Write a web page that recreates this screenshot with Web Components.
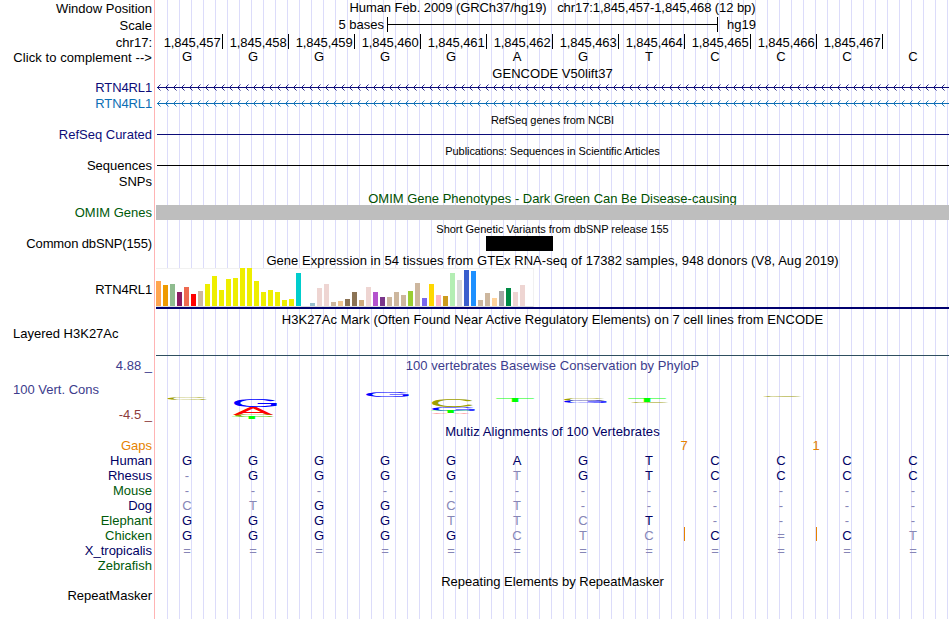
<!DOCTYPE html>
<html lang="en">
<head>
<meta charset="UTF-8">
<title>Genome Browser chr17:1,845,457-1,845,468</title>
<style>
    body {
        margin: 0;
        background: #fff;
        overflow: hidden;
    }
</style>
</head>
<body>
<genome-browser></genome-browser>

<script>
// One horizontal band: a label on the left, the track on the right
class TrackRow extends HTMLElement {
    connectedCallback() {
        this.attachShadow({ mode: 'open' });
        this.shadowRoot.innerHTML = `
            <style>
                :host {
                    display: grid;
                    grid-template-columns: 152px 793px;
                    column-gap: 4px;
                    height: var(--h, 15px);
                    line-height: 15px;
                }
                .label {
                    text-align: right;
                    white-space: nowrap;
                    color: var(--label, #000);
                    padding-top: var(--label-top, 0px);
                    letter-spacing: var(--label-ls, 0);
                }
                .track {
                    min-width: 0;
                }
            </style>
            <div class="label"><slot name="label"></slot></div>
            <div class="track"><slot></slot></div>
        `;
    }
}

// Centred caption above a track
class TrackTitle extends HTMLElement {
    connectedCallback() {
        this.attachShadow({ mode: 'open' });
        this.shadowRoot.innerHTML = `
            <style>
                :host {
                    display: block;
                    text-align: center;
                    white-space: nowrap;
                    line-height: 15px;
                    letter-spacing: var(--ls, 0);
                }
                :host([small]) {
                    font-size: 11px;
                    line-height: 16px;
                }
            </style>
            <slot></slot>
        `;
    }
}

class ScaleBar extends HTMLElement {
    connectedCallback() {
        this.attachShadow({ mode: 'open' });
        this.shadowRoot.innerHTML = `
            <style>
                :host {
                    display: grid;
                    grid-template-columns: 228px 331px auto;
                    column-gap: 3px;
                    height: 15px;
                    margin-top: -1px;
                }
                .from { text-align: right; }
                .to { padding-left: 6px; }
                .bar {
                    box-sizing: border-box;
                    border: solid #000;
                    border-width: 0 1px;
                    background: linear-gradient(#000, #000) 0 7px / 100% 1px no-repeat;
                }
            </style>
            <span class="from">5 bases</span>
            <span class="bar"></span>
            <span class="to">hg19</span>
        `;
    }
}

class PositionRuler extends HTMLElement {
    connectedCallback() {
        this.attachShadow({ mode: 'open' });
        let cells = '';
        for (let i = 57; i < 68; i++) {
            cells += `<span>1,845,4${i}</span>`;
        }
        this.shadowRoot.innerHTML = `
            <style>
                :host {
                    display: grid;
                    grid-template-columns: 67px repeat(10, 66px);
                    margin-top: -1px;
                    line-height: 17px;
                    height: 15px;
                    letter-spacing: -0.12px;
                }
                span {
                    height: 15px;
                    text-align: right;
                    padding-right: 1.5px;
                    border-right: 1px solid #000;
                }
            </style>
            ${cells}
        `;
    }
}

const HUMAN = 'GGGGGAGTCCCC';

class BaseRow extends HTMLElement {
    connectedCallback() {
        const bases = this.getAttribute('bases');
        const gaps = (this.getAttribute('gaps') || '').split(',').map(Number);
        this.attachShadow({ mode: 'open' });
        const cells = [...bases].map((b, i) => {
            const cls = (b === HUMAN[i] ? 'same' : 'diff') + (gaps.includes(i + 1) ? ' gap' : '');
            return `<span class="${cls}">${b}</span>`;
        }).join('');
        this.shadowRoot.innerHTML = `
            <style>
                :host {
                    display: grid;
                    grid-template-columns: repeat(12, 66px);
                    margin-left: -2px;
                    line-height: 15px;
                    height: 15px;
                    text-align: center;
                }
                .same { color: var(--same, #000064); }
                .diff { color: #8686b6; }
                .gap {
                    background: linear-gradient(#e68200, #e68200) 100% 0 / 1px 14px no-repeat;
                    background-origin: border-box;
                    background-clip: border-box;
                    border-right: 3px solid transparent;
                    margin: -1px -3px 0 0;
                    padding-top: 1px;
                    height: 14px;
                }
            </style>
            ${cells}
        `;
    }
}

class GapCounts extends HTMLElement {
    connectedCallback() {
        this.attachShadow({ mode: 'open' });
        this.shadowRoot.innerHTML = `
            <style>
                :host {
                    display: grid;
                    grid-template-columns: 495px 66px 66px 66px;
                    color: #e68200;
                    text-align: center;
                }
            </style>
            <span></span><span>7</span><span></span><span>1</span>
        `;
    }
}

// Intron line with strand arrows, pointing left
class StrandLine extends HTMLElement {
    connectedCallback() {
        this.attachShadow({ mode: 'open' });
        let d = '';
        for (let x = 1; x < 793; x += 8) {
            d += `M${x + 3.5} 4.5L${x + 0.5} 7.5L${x + 3.5} 10.5`;
        }
        this.shadowRoot.innerHTML = `
            <style>
                :host, svg { display: block; }
            </style>
            <svg width="793" height="15" fill="none" stroke="currentColor">
                <path d="M1 7.5H793"/>
                <path d="${d}" stroke-width="0.9"/>
            </svg>
        `;
    }
}

class FlatLine extends HTMLElement {
    connectedCallback() {
        this.attachShadow({ mode: 'open' });
        this.shadowRoot.innerHTML = `
            <style>
                :host {
                    display: block;
                    height: 1px;
                    background: currentColor;
                    margin: 7px 0 0 1px;
                }
            </style>
        `;
    }
}

class ItemBlock extends HTMLElement {
    connectedCallback() {
        this.attachShadow({ mode: 'open' });
        this.shadowRoot.innerHTML = `
            <style>
                :host {
                    display: block;
                    height: 15px;
                    background: currentColor;
                    margin-left: var(--start, 0px);
                    width: var(--span, 793px);
                }
            </style>
        `;
    }
}

// [colour, heights...] in tissue order
const TISSUES = [
    ['#ffa54f', 25], ['#ee9a00', 21], ['#8fbc8f', 22], ['#8b1c62', 14],
    ['#ee6a50', 19], ['#ff0000', 12], ['#cdb79e', 15],
    ['#eeee00', 22, 30, 16, 27, 28, 38, 38, 25, 14, 16, 14, 6, 7],
    ['#00cdcd', 33], ['#ee82ee', 0], ['#9ac0cd', 3], ['#eed5d2', 18, 22],
    ['#cdb79e', 4], ['#eec591', 5], ['#8b7355', 7, 14], ['#cdaa7d', 6],
    ['#eed5d2', 19], ['#b452cd', 14], ['#7a378b', 9], ['#cdb79e', 9, 14, 11],
    ['#9acd32', 15], ['#cdb79e', 23], ['#7a67ee', 8], ['#ffd700', 22],
    ['#ffb6c1', 11], ['#cd9b1d', 10], ['#b4eeb4', 33], ['#d9d9d9', 26],
    ['#3a5fcd', 36], ['#1e90ff', 35], ['#cdb79e', 6, 13], ['#ffd39b', 8],
    ['#a6a6a6', 15], ['#008b45', 18], ['#eed5d2', 14, 21], ['#ff00ff', 0]
];

class ExpressionChart extends HTMLElement {
    connectedCallback() {
        this.attachShadow({ mode: 'open' });
        const bars = TISSUES.flatMap(([color, ...heights]) =>
            heights.map(h => `<i style="height:${h}px;background:${color}"></i>`)
        ).join('');
        this.shadowRoot.innerHTML = `
            <style>
                :host {
                    display: block;
                    height: 39px;
                    border-bottom: 2px solid #00006e;
                }
                .chart {
                    box-sizing: border-box;
                    display: flex;
                    align-items: flex-end;
                    gap: 2px;
                    width: 378px;
                    height: 39px;
                    background: #fff;
                    border: solid #f1f1f1;
                    border-width: 1px 1px 1px 0;
                    border-bottom-color: #ddd;
                }
                i { flex: 0 0 5px; }
            </style>
            <div class="chart">${bars}</div>
        `;
    }
}

// Horizontal ink extent, cap height and overshoot of the letters at 10px
const INK = {
    A: [0.02, 6.65, 6.9, 0],
    C: [0.5, 6.86, 7.0, 0.1],
    G: [0.5, 7.1, 7.0, 0.1],
    T: [0.2, 5.9, 6.9, 0]
};

// letter, left, right, top, bottom, colour
const LOGO = [
    ['C', 11.5, 51, 40, 42, '#a0a000'],
    ['G', 78, 121, 41, 49, '#0000ff'],
    ['A', 77, 117, 49, 57, '#ff0000'],
    ['C', 79, 118, 57, 59, '#a0a000'],
    ['T', 76, 116, 59, 61, '#00ff00'],
    ['G', 210, 253, 34, 39, '#0000ff'],
    ['C', 276, 317, 41, 49, '#a0a000'],
    ['G', 276, 319, 49, 53, '#0000ff'],
    ['T', 275, 314, 53, 55, '#00ff00'],
    ['A', 275, 314, 55, 56, '#ff0000'],
    ['T', 340, 378, 40, 44, '#00ff00'],
    ['C', 408, 449, 40, 43, '#a0a000'],
    ['G', 408, 451, 43, 45, '#0000ff'],
    ['T', 472, 510, 40, 44, '#00ff00'],
    ['C', 475, 513, 44, 45, '#a0a000'],
    ['C', 607, 646, 38, 39, '#a0a000']
];

class ConservationLogo extends HTMLElement {
    connectedCallback() {
        this.attachShadow({ mode: 'open' });
        const letters = LOGO.map(([ch, x0, x1, y0, y1, color]) => {
            const [l, r, top, under] = INK[ch];
            const sx = (x1 - x0) / (r - l);
            const sy = (y1 - y0) / (top + under);
            return `<text fill="${color}" transform="translate(${x0 - l * sx} ${y1 - under * sy}) scale(${sx} ${sy})">${ch}</text>`;
        }).join('');
        this.shadowRoot.innerHTML = `
            <style>
                :host { display: block; margin-top: -15px; }
                svg { display: block; }
                text { font: 10px "Liberation Sans", Arial, sans-serif; }
            </style>
            <svg width="793" height="66">${letters}</svg>
        `;
    }
}

class GenomeBrowser extends HTMLElement {
    connectedCallback() {
        this.attachShadow({ mode: 'open' });
        this.shadowRoot.innerHTML = `
            <style>
                :host {
                    display: block;
                    width: 949px;
                    height: 619px;
                    overflow: hidden;
                    color: #000;
                    font: 13px "Liberation Sans", Arial, Helvetica, sans-serif;
                    background:
                        linear-gradient(#ffb4b4, #ffb4b4) 154px 0 / 1px 100% no-repeat,
                        repeating-linear-gradient(90deg, #dcdcfa 0 1px, transparent 1px 12px) 167px 0 / 792px 100% no-repeat,
                        #fff;
                }
                .left { display: block; text-align: left; padding-left: 13px; }
                .limits {
                    display: grid;
                    grid-template-rows: 24px 25px 15px;
                }
                .dark { color: #000064; }
                .blue { --label: #0c0c78; }
                .light { --label: #0c6eb4; }
                .navy { --label: #000064; }
                .green { --label: #005a0a; }
                .tight { --label-ls: -0.13px; }
            </style>
            <track-row style="--h:18px;--label-top:1px">
                <span slot="label">Window Position</span>
                <track-title style="--ls:-0.08px">Human Feb. 2009 (GRCh37/hg19) &nbsp; chr17:1,845,457-1,845,468 (12 bp)</track-title>
            </track-row>
            <track-row style="--h:17px"><span slot="label">Scale</span><scale-bar></scale-bar></track-row>
            <track-row><span slot="label">chr17:</span><position-ruler></position-ruler></track-row>
            <track-row style="--h:16px;--label-ls:0.08px">
                <span slot="label">Click to complement --&gt;</span>
                <base-row bases="${HUMAN}" style="--same:#000;margin-top:-1px"></base-row>
            </track-row>

            <track-row style="--h:14px"><track-title style="--ls:0.02px">GENCODE V50lift37</track-title></track-row>
            <track-row class="blue tight" style="--h:16px"><span slot="label">RTN4RL1</span><strand-line style="color:#0c0c78"></strand-line></track-row>
            <track-row class="light tight" style="--h:16px"><span slot="label">RTN4RL1</span><strand-line style="color:#0c6eb4"></strand-line></track-row>

            <track-row><track-title small style="--ls:-0.04px">RefSeq genes from NCBI</track-title></track-row>
            <track-row class="blue" style="--h:16px"><span slot="label">RefSeq Curated</span><flat-line style="color:#0c0c78"></flat-line></track-row>

            <track-row><track-title small style="--ls:-0.07px">Publications: Sequences in Scientific Articles</track-title></track-row>
            <track-row style="--h:16px"><span slot="label">Sequences</span><flat-line></flat-line></track-row>
            <track-row style="--h:17px"><span slot="label">SNPs</span></track-row>

            <track-row style="--h:14px"><track-title style="color:#005000">OMIM Gene Phenotypes - Dark Green Can Be Disease-causing</track-title></track-row>
            <track-row class="green" style="--h:16px"><span slot="label">OMIM Genes</span><item-block style="color:#bebebe"></item-block></track-row>

            <track-row><track-title small style="--ls:-0.02px">Short Genetic Variants from dbSNP release 155</track-title></track-row>
            <track-row class="tight" style="--h:17px"><span slot="label">Common dbSNP(155)</span><item-block style="--start:330px;--span:67px"></item-block></track-row>

            <track-row><track-title style="--ls:0.055px">Gene Expression in 54 tissues from GTEx RNA-seq of 17382 samples, 948 donors (V8, Aug 2019)</track-title></track-row>
            <track-row class="tight" style="--h:44px;--label-top:14px"><span slot="label">RTN4RL1</span><expression-chart></expression-chart></track-row>

            <track-row><track-title style="--ls:0.045px">H3K27Ac Mark (Often Found Near Active Regulatory Elements) on 7 cell lines from ENCODE</track-title></track-row>
            <track-row style="--h:31px">
                <span slot="label" class="left" style="line-height:14px">Layered H3K27Ac</span>
                <flat-line style="color:#2f4f5f;margin:28px 0 0"></flat-line>
            </track-row>

            <track-row style="--h:66px">
                <div slot="label" class="limits">
                    <span style="color:#3c3c8c">4.88 _</span>
                    <span class="left" style="color:#3c3c8c">100 Vert. Cons</span>
                    <span style="color:#8c3c3c">-4.5 _</span>
                </div>
                <track-title style="color:#3c3c8c;--ls:0.03px">100 vertebrates Basewise Conservation by PhyloP</track-title>
                <conservation-logo></conservation-logo>
            </track-row>

            <track-row style="--h:14px"><track-title class="dark" style="--ls:0.1px">Multiz Alignments of 100 Vertebrates</track-title></track-row>
            <track-row style="--label:#e68200"><span slot="label">Gaps</span><gap-counts></gap-counts></track-row>
            <track-row class="navy"><span slot="label">Human</span><base-row bases="${HUMAN}"></base-row></track-row>
            <track-row class="navy"><span slot="label">Rhesus</span><base-row bases="-GGGGTGTCCCC"></base-row></track-row>
            <track-row class="green"><span slot="label">Mouse</span><base-row bases="------------"></base-row></track-row>
            <track-row class="navy"><span slot="label">Dog</span><base-row bases="CTGGCT------"></base-row></track-row>
            <track-row class="green"><span slot="label">Elephant</span><base-row bases="GGGGTTCT----"></base-row></track-row>
            <track-row class="green"><span slot="label">Chicken</span><base-row bases="GGGGGCTCC=CT" gaps="8,10"></base-row></track-row>
            <track-row class="navy"><span slot="label">X_tropicalis</span><base-row bases="============"></base-row></track-row>
            <track-row class="green" style="--h:16px"><span slot="label">Zebrafish</span></track-row>

            <track-row style="--h:14px"><track-title>Repeating Elements by RepeatMasker</track-title></track-row>
            <track-row><span slot="label">RepeatMasker</span></track-row>
        `;
    }
}

customElements.define('track-row', TrackRow);
customElements.define('track-title', TrackTitle);
customElements.define('scale-bar', ScaleBar);
customElements.define('position-ruler', PositionRuler);
customElements.define('base-row', BaseRow);
customElements.define('gap-counts', GapCounts);
customElements.define('strand-line', StrandLine);
customElements.define('flat-line', FlatLine);
customElements.define('item-block', ItemBlock);
customElements.define('expression-chart', ExpressionChart);
customElements.define('conservation-logo', ConservationLogo);
customElements.define('genome-browser', GenomeBrowser);
</script>
</body>
</html>
